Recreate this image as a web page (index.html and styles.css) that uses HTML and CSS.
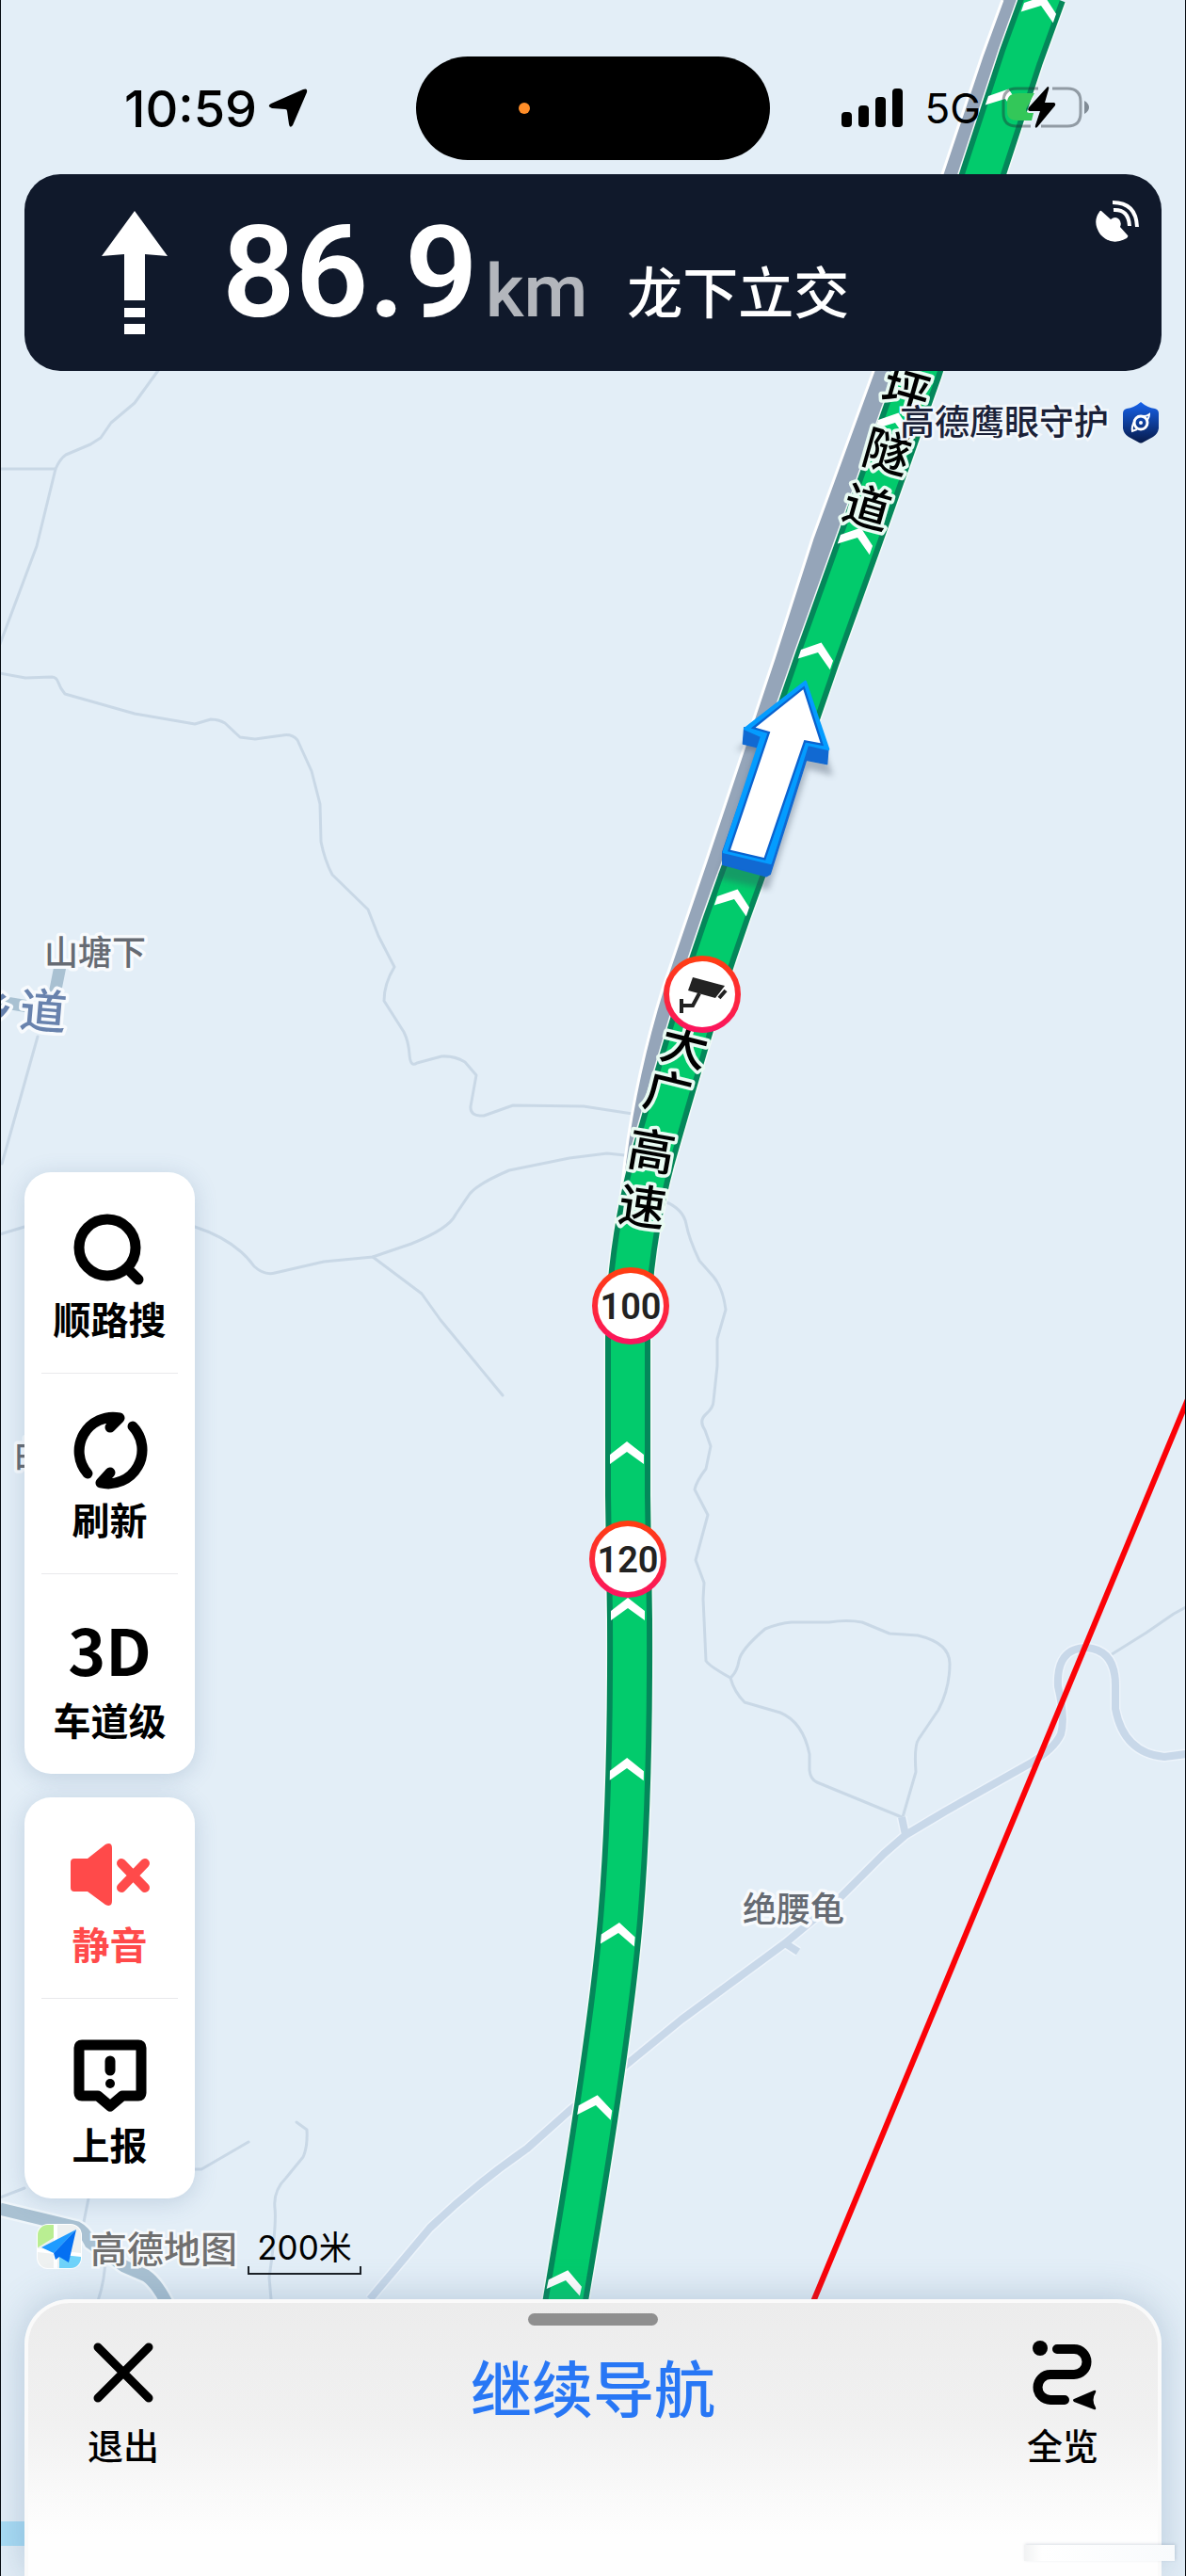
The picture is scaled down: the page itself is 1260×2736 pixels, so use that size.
FILE: index.html
```html
<!DOCTYPE html>
<html lang="zh-CN">
<head>
<meta charset="utf-8">
<meta name="viewport" content="width=device-width, initial-scale=1">
<title>高德地图 导航</title>
<link rel="stylesheet" href="styles.css">
</head>
<body>
<main class="screen">
  <svg class="map" viewBox="0 0 1260 2736" preserveAspectRatio="xMidYMin slice" role="img" aria-label="导航地图">
    <defs>
      <linearGradient id="ring" x1="0" y1="0" x2="0" y2="1">
        <stop offset="0" stop-color="#ff3d12"/><stop offset="1" stop-color="#fb155e"/>
      </linearGradient>
      <filter id="soft" x="-30%" y="-30%" width="160%" height="160%"><feGaussianBlur stdDeviation="10"/></filter>
      <path id="chevron" d="M-18 3L0-11 18 3V13L0 0-18 13Z"/>
    </defs>
    <rect class="water" x="0" y="2678" width="60" height="26"/>
    <g class="lane">
      <path d="M172 388L143 428 118 449 107 465 96 472 70 483Q64 487 59 498L39 580 0 684"/>
      <path d="M0 498H59"/>
      <path d="M0 715L27 720 55 719Q60 719 62 725T69 737L143 758 207 769 224 764Q232 764 239 768L255 783 271 785 300 781Q310 779 316 786L331 819 340 854 341 894Q345 914 353 929L391 966 402 994 419 1027Q408 1045 408 1063L429 1096Q434 1106 435 1120T443 1129L469 1122Q482 1121 494 1128L506 1142 500 1175Q499 1186 514 1185L545 1174 620 1175 672 1183"/>
      <path d="M664 1227L645 1225 605 1230 541 1243Q508 1257 499 1268L484 1290Q477 1305 437 1321L396 1335 344 1340 292 1352Q281 1355 270 1345 250 1317 207 1303H26L0 1311"/>
      <path d="M396 1335L448 1374 468 1402 534 1482"/>
      <path d="M40 1101L2 1236"/>
      <path d="M706 1276Q726 1284 729 1300T743 1339L758 1356Q768 1368 771 1391L762 1422V1451L758 1488Q758 1495 750 1502T749 1519L755 1536 750 1560Q740 1573 738 1582L752 1609 739 1657 748 1681 747 1698 750 1764Q754 1770 776 1782 780 1797 791 1808L829 1819Q853 1829 860 1863V1880Q861 1890 868 1893L958 1930"/>
      <path d="M776 1782Q783 1776 785 1764T813 1730Q828 1724 841 1723H881Q900 1720 916 1723L945 1735 975 1737Q1009 1745 1009 1767 1009 1793 997 1816L976 1847Q971 1854 973 1882L959 1930"/>
      <path d="M1178 1759L1218 1734 1247 1714 1260 1707"/>
      <path d="M207 2304H214L264 2275M0 2334L26 2324M315 2254L326 2262Q327 2280 322 2291L304 2313Q290 2327 292 2345T286 2419L288 2442M95 2330L89 2360M112 2396Q112 2420 104 2444"/>
    </g>
    <path class="street-edge" d="M393 2442L457 2366Q505 2320 560 2282L607 2240 669 2190 724 2145 834 2064 894 2014 939 1969 962 1949 1004 1924 1096 1872Q1120 1857 1127 1842 1132 1825 1124 1791 1122 1750 1155 1750 1185 1753 1185 1790V1815Q1194 1862 1237 1866L1260 1863M958 1930L962 1949M834 2064L848 2073"/>
    <path class="street" d="M393 2442L457 2366Q505 2320 560 2282L607 2240 669 2190 724 2145 834 2064 894 2014 939 1969 962 1949 1004 1924 1096 1872Q1120 1857 1127 1842 1132 1825 1124 1791 1122 1750 1155 1750 1185 1753 1185 1790V1815Q1194 1862 1237 1866L1260 1863M958 1930L962 1949M834 2064L848 2073"/>
    <path class="river-edge" d="M0 2346L82 2366Q90 2370 96 2382L132 2407 155 2417Q168 2426 180 2452"/>
    <path class="river" d="M0 2346L82 2366Q90 2370 96 2382L132 2407 155 2417Q168 2426 180 2452M64 1026L58 1056M0 1064L30 1069"/>
    <path class="ray" d="M1262 1486L863 2447"/>

    <path class="carriageway" d="M1065 0L1043 60 1001 185 928 394 863 572 822 700 750 915 704 1050 676 1155 664 1232 654 1314 643 1430 667 1430 700 1210 758 1010 868 700 1107 0Z"/>
    <path class="shoulder" d="M1065 0L1043 60 1001 185 928 394 863 572 822 700 750 915 704 1050Q676 1140 664 1232L643 1410"/>
    <g class="route">
      <path class="route-halo" d="M1109-6L1085 60 1044 185 977 394 914 572 868 700 790 925Q757 1014 733 1095T693 1232Q667 1330 667 1424V1588L669 1720Q670 1920 658 2050T600 2448"/>
      <path class="route-border" d="M1109-6L1085 60 1044 185 977 394 914 572 868 700 790 925Q757 1014 733 1095T693 1232Q667 1330 667 1424V1588L669 1720Q670 1920 658 2050T600 2448"/>
      <path class="route-fill" d="M1109-6L1085 60 1044 185 977 394 914 572 868 700 790 925Q757 1014 733 1095T693 1232Q667 1330 667 1424V1588L669 1720Q670 1920 658 2050T600 2448"/>
    </g>
    <g fill="#fff">
      <use href="#chevron" transform="translate(1106 6) rotate(19)"/>
      <use href="#chevron" transform="translate(1068 105) rotate(19)"/>
      <use href="#chevron" transform="translate(951 449) rotate(19)"/>
      <use href="#chevron" transform="translate(911 571) rotate(19)"/>
      <use href="#chevron" transform="translate(869 693) rotate(19)"/>
      <use href="#chevron" transform="translate(780 955) rotate(19)"/>
      <use href="#chevron" transform="translate(666 1542)"/>
      <use href="#chevron" transform="translate(667 1708)"/>
      <use href="#chevron" transform="translate(666 1878) rotate(1)"/>
      <use href="#chevron" transform="translate(657 2053) rotate(5)"/>
      <use href="#chevron" transform="translate(633 2236) rotate(9)"/>
      <use href="#chevron" transform="translate(601 2422) rotate(12)"/>
    </g>

    <g class="road-name">
      <text transform="translate(962 417) rotate(16)" y="17">坪</text>
      <text transform="translate(942 481) rotate(16)" y="17">隧</text>
      <text transform="translate(921 540) rotate(16)" y="17">道</text>
      <text transform="translate(727 1112) rotate(14)" y="17">大</text>
      <text transform="translate(709 1162) rotate(14)" y="17">广</text>
      <text transform="translate(692 1224) rotate(10)" y="17">高</text>
      <text transform="translate(682 1283) rotate(8)" y="17">速</text>
    </g>
    <g class="place">
      <text x="101" y="1025">山塘下</text>
      <text x="843" y="2041">绝腰龟</text>
      <text x="33" y="1558">曲</text>
    </g>
    <g class="village-road">
      <text transform="translate(-10 1072) rotate(5)" y="17">乡</text>
      <text transform="translate(46 1075) rotate(5)" y="17">道</text>
    </g>

    <g transform="translate(746 1056)">
      <circle r="38" fill="#fff" stroke="url(#ring)" stroke-width="6"/>
      <path d="M-10-18L24-9 14 4-15-4Z" fill="#222"/>
      <path d="M-3-1L-10 12H-22M-22 5V20M25-4L18 4" fill="none" stroke="#222" stroke-width="4"/>
    </g>
    <g class="limit" transform="translate(670 1387)"><circle r="38"/><text y="14">100</text></g>
    <g class="limit" transform="translate(667 1656)"><circle r="38"/><text y="14">120</text></g>

    <g transform="translate(700 700) scale(.3333)">
      <path d="M470 120L555 372 475 350 350 735 190 700 310 290 245 290Z" fill="#39465a" opacity=".35" filter="url(#soft)"/>
      <path d="M272 218L268 270 318 282 203 615V655L342 693 355 685 470 322 536 335 540 285Z" fill="#1169d2" stroke="#1169d2" stroke-width="4" stroke-linejoin="round"/>
      <path d="M467 72L540 287 474 272 356 650 207 615 328 246 274 222Z" fill="#049cff" stroke="#049cff" stroke-width="8" stroke-linejoin="round"/>
      <path d="M460 97L515 268 463 258 335 633 228 608 355 232 308 218Z" fill="#fff" stroke="#0b63cf" stroke-width="14" paint-order="stroke"/>
    </g>
  </svg>

  <div class="hud">
    <header class="status">
      <div class="status-time">
        <time>10:59</time>
        <svg width="42" height="42" viewBox="0 0 42 42" aria-label="定位"><path d="M37 1Q42-1 41 4L26 39Q23 43 22 38L20 24Q20 22 18 22L4 21Q-2 19 3 16Z"/></svg>
      </div>
      <div class="island"><i></i></div>
      <div class="status-net">
        <svg width="66" height="42" viewBox="0 0 66 42" aria-label="信号"><rect y="25" width="11" height="16" rx="4"/><rect x="18" y="18" width="11" height="23" rx="4"/><rect x="36" y="9" width="11" height="32" rx="4"/><rect x="54" width="11" height="41" rx="4"/></svg>
        <span>5G</span>
        <svg width="94" height="46" viewBox="0 0 94 46" aria-label="充电中">
          <path d="M39 2H16Q2 2 2 16V28Q2 42 16 42H31M54 2H70Q84 2 84 16V28Q84 42 70 42H42" fill="none" stroke="#1e2833" stroke-opacity=".42" stroke-width="3"/>
          <path d="M88 15Q93 18 93 22T88 29Z" fill="#1e2833" fill-opacity=".5"/>
          <path d="M35 7H18Q6 7 6 17V27Q6 36 18 36H32L34 28H29Q24 26 27 22Z" fill="#33c759"/>
          <path d="M49 0Q51 0 50 3L46 17H56Q58 18 57 20L38 43Q35 45 36 41L41 26H30Q27 25 29 22Z"/>
        </svg>
      </div>
    </header>

    <section class="banner" aria-label="下一步">
      <svg class="turn" width="70" height="132" viewBox="0 0 70 132" fill="#fff" aria-label="直行"><path d="M35 0L70 48Q58 47 46 46V95H24V46Q12 47 0 48ZM24 103H46V113H24ZM24 120H46V131H24Z"/></svg>
      <p class="distance"><strong>86.9</strong><span>km</span></p>
      <h1>龙下立交</h1>
      <svg class="gps" width="46" height="46" viewBox="0 0 46 46" aria-label="卫星信号"><path d="M6 11L16 20Q21 16 25 20 28 24 26 28L34 37Q35 38 33 40 17 49 5 36-4 23 4 12Q5 10 6 11Z" fill="#fff"/><path d="M19 10Q35 9 36 27M18 2Q43 2 44 28" fill="none" stroke="#fff" stroke-width="4"/></svg>
    </section>

    <p class="guard">高德鹰眼守护
      <svg width="38" height="44" viewBox="0 0 38 44"><defs><linearGradient id="shield" x1="0" y1="0" x2="0" y2="1"><stop offset="0" stop-color="#1763ec"/><stop offset="1" stop-color="#071a4a"/></linearGradient></defs><path d="M19 0Q26 6 34 7 38 8 38 12V28Q37 34 32 37L21 43Q19 44 17 43L6 37Q1 34 0 28V12Q0 8 4 7 12 6 19 0Z" fill="url(#shield)"/><circle cx="19" cy="22" r="7" fill="none" stroke="#fff" stroke-width="3"/><circle cx="19" cy="22" r="2" fill="#fff"/><path d="M12 21Q9 26 10 31L15 29M22 15Q25 15 28 13 28 16 26 19" fill="none" stroke="#fff" stroke-width="2"/></svg>
    </p>

    <nav class="tools" aria-label="导航工具">
      <div class="card">
        <button type="button">
          <svg width="84" height="84" viewBox="0 0 84 84" fill="none" stroke="#000" stroke-width="11" stroke-linecap="round"><circle cx="39" cy="40" r="30"/><path d="M61 63L72 74"/></svg>
          <span>顺路搜</span>
        </button>
        <button type="button">
          <svg width="84" height="84" viewBox="0 0 84 84" fill="none" stroke="#000" stroke-width="11" stroke-linecap="round" stroke-linejoin="round"><path d="M18 67A36 36 0 0 1 52 8L42 18M66 17A36 36 0 0 1 32 77L42 66"/></svg>
          <span>刷新</span>
        </button>
        <button type="button"><b>3D</b><span>车道级</span></button>
      </div>
      <div class="card">
        <button type="button" class="muted">
          <svg width="86" height="84" viewBox="0 0 86 84" fill="#ff4a4a"><path d="M5 25H19L38 10Q45 7 45 14V70Q45 77 38 74L19 60H5Q1 60 1 56V29Q1 25 5 25Z"/><path d="M55 30L80 56M80 30L55 56" stroke="#ff4a4a" stroke-width="10" stroke-linecap="round"/></svg>
          <span>静音</span>
        </button>
        <button type="button">
          <svg width="84" height="84" viewBox="0 0 84 84"><path d="M12 10H72Q75 10 75 13V61Q75 64 72 64H55L42 75 29 64H12Q9 64 9 61V13Q9 10 12 10Z" fill="none" stroke="#000" stroke-width="11" stroke-linejoin="round"/><path d="M42 27V37" stroke="#000" stroke-width="11" stroke-linecap="round"/><circle cx="42" cy="51" r="5"/></svg>
          <span>上报</span>
        </button>
      </div>
    </nav>

    <div class="credit">
      <svg width="48" height="48" viewBox="0 0 48 48"><defs><clipPath id="tile"><rect x="1" y="1" width="46" height="46" rx="11"/></clipPath></defs><rect width="48" height="48" rx="12" fill="#fff"/><g clip-path="url(#tile)"><rect width="48" height="48" fill="#eef1f1"/><path d="M0 0H19V14L0 26Z" fill="#b9ee92"/><path d="M24 48V34L48 33V48Z" fill="#6fd3fa"/><path d="M20 0V48M0 28L48 33" stroke="#fff" stroke-width="4"/></g><path d="M42 6L5 25 18 31Z" fill="#1f9bff"/><path d="M42 6L18 31 20 38 24 35 34 41Z" fill="#0470f2"/></svg>
      <strong>高德地图</strong>
      <span class="scale">200米</span>
    </div>

    <footer class="sheet">
      <i class="grip"></i>
      <button type="button" class="side-action">
        <svg width="74" height="76" viewBox="0 0 74 76" fill="none" stroke="#000" stroke-width="9" stroke-linecap="round"><path d="M10 9L64 63M64 9L10 63"/></svg>
        <span>退出</span>
      </button>
      <button type="button" class="resume">继续导航</button>
      <button type="button" class="side-action">
        <svg width="74" height="76" viewBox="0 0 74 76"><circle cx="13" cy="10" r="8"/><path d="M31 11H49A13 13 0 0 1 49 38H24A13 13 0 0 0 24 65H39" fill="none" stroke="#000" stroke-width="10" stroke-linecap="round"/><path d="M49 64L70 55Q73 54 72 57 67 65 72 73 73 76 70 75L49 67Q47 65 49 64Z"/></svg>
        <span>全览</span>
      </button>
      <i class="tab-strip"></i>
    </footer>
  </div>
</main>
</body>
</html>
```

FILE: styles.css
```css
* { box-sizing: border-box; }

body {
  margin: 0;
  background: #e3eef7;
  color: #000;
  font-family: Inter, "Noto Sans CJK SC", sans-serif;
}

p, h1 { margin: 0; }

button {
  padding: 0;
  border: 0;
  background: none;
  color: inherit;
  font: inherit;
  cursor: pointer;
}

svg { flex: none; }

.screen {
  position: relative;
  min-height: 100vh;
  overflow: hidden;
  border: solid #050a10;
  border-width: 0 1px;
}

/* Map canvas behind the interface */
.map {
  position: absolute;
  inset: 0;
  width: 100%;
  height: 100%;
}

.map text { font-family: "Noto Sans CJK SC", sans-serif; text-anchor: middle; paint-order: stroke; stroke-linejoin: round; }
.water { fill: #a9dcf5; }
.lane { fill: none; stroke: #c9d8e6; stroke-width: 3; stroke-linecap: round; stroke-linejoin: round; }
.street-edge { fill: none; stroke: #edf4fb; stroke-width: 11; }
.street { fill: none; stroke: #c8d8e9; stroke-width: 8; stroke-linejoin: round; }
.river-edge { fill: none; stroke: #eef5fa; stroke-width: 18; }
.river { fill: none; stroke: #a9c1d2; stroke-width: 13; }
.ray { fill: none; stroke: #fb0207; stroke-width: 6; }
.carriageway { fill: #95a5b9; }
.shoulder { fill: none; stroke: #fff; stroke-width: 3; }
.route path { fill: none; }
.route-halo { stroke: #f3faf8; stroke-width: 51; }
.route-border { stroke: #04875a; stroke-width: 48; }
.route-fill { stroke: #02cb6c; stroke-width: 36; }
.road-name text { font-size: 50px; font-weight: 500; stroke: #e9fbf3; stroke-width: 7px; }
.place text { font-size: 36px; font-weight: 500; fill: #666b73; stroke: #f7fafd; stroke-width: 7px; }
.village-road text { font-size: 50px; font-weight: 500; fill: #6882ad; stroke: #f7fafd; stroke-width: 7px; }
.limit circle { fill: #fff; stroke: url(#ring); stroke-width: 6px; }
.limit text { font: 600 38px Roboto, sans-serif; fill: #222; }

/* Interface column */
.hud {
  position: relative;
  display: flex;
  flex-direction: column;
  min-height: 100vh;
  padding: 0 25px;
}

.status {
  display: grid;
  grid-template-columns: 1fr 376px 1fr;
  align-items: center;
  height: 185px;
  padding-top: 45px;
}

.status-time, .status-net { display: flex; align-items: center; }
.status-time { gap: 12px; padding-left: 106px; font-size: 54px; font-weight: 500; }
.status-net { justify-content: flex-end; gap: 22px; padding-right: 76px; font-size: 44px; }

.island {
  display: flex;
  align-items: center;
  height: 110px;
  padding-left: 109px;
  border-radius: 55px;
  background: #000;
}

.island i { width: 12px; height: 12px; border-radius: 50%; background: #ff8d28; }

.banner {
  display: flex;
  align-items: center;
  min-height: 209px;
  padding: 0 24px 0 82px;
  border-radius: 38px;
  background: #10192b;
  color: #fff;
}

.distance { display: flex; align-items: baseline; margin-left: 58px; font-family: Roboto, sans-serif; line-height: 1; }
.distance strong { font-size: 136px; font-weight: 600; }
.distance span { margin-left: 8px; color: #b3b6bc; font-size: 78px; font-weight: 500; }
.banner h1 { margin: 44px 0 0 42px; font-size: 59px; font-weight: 500; line-height: 60px; }
.gps { align-self: flex-start; margin: 28px 0 0 auto; }

.guard {
  display: flex;
  align-items: center;
  align-self: flex-end;
  gap: 15px;
  margin: 33px 3px 0 0;
  color: #1a2138;
  font-size: 37px;
  font-weight: 500;
  line-height: 44px;
  -webkit-text-stroke: 5px #f3f8fc;
  paint-order: stroke fill;
}

.tools {
  display: flex;
  flex-direction: column;
  gap: 25px;
  width: 181px;
  margin-top: auto;
}

.card {
  display: flex;
  flex-direction: column;
  border-radius: 28px;
  background: #fff;
  box-shadow: 0 4px 24px rgba(70, 105, 145, .22);
}

.card button {
  position: relative;
  display: flex;
  flex-direction: column;
  align-items: center;
  justify-content: center;
  height: 213px;
  padding-top: 14px;
  font-size: 40px;
  font-weight: 700;
  line-height: 60px;
}

.card button + button::before {
  content: "";
  position: absolute;
  inset: 0 18px auto;
  height: 1px;
  background: #e9e9ec;
}

.card svg { margin-bottom: 4px; }
.card b { height: 88px; font: 700 68px/80px "Noto Sans CJK SC", sans-serif; }
.card .muted { color: #ff4a4a; }

.credit {
  display: flex;
  align-items: center;
  height: 107px;
  padding: 0 0 6px 13px;
}

.credit strong {
  margin-left: 9px;
  color: #707070;
  font-size: 39px;
  font-weight: 500;
  -webkit-text-stroke: 5px #f7fafc;
  paint-order: stroke fill;
}

.scale {
  width: 121px;
  margin: 4px 0 0 11px;
  border: solid #1b1f24;
  border-width: 0 2px 2px;
  border-image: linear-gradient(transparent 84%, #1b1f24 84%) 2;
  font-size: 35px;
  font-weight: 400;
  line-height: 54px;
  text-align: center;
}

.sheet {
  position: relative;
  display: flex;
  align-items: flex-start;
  justify-content: space-between;
  min-height: 294px;
  padding: 38px 63px 0;
  border: 4px solid #fafafa;
  border-bottom: 0;
  border-radius: 48px 48px 0 0;
  background: linear-gradient(#ececec, #f1f1f1 45%, #fefefe 85%);
  box-shadow: 0 0 40px rgba(70, 105, 145, .3);
}

.grip {
  position: absolute;
  top: 11px;
  left: calc(50% - 69px);
  width: 138px;
  height: 13px;
  border-radius: 7px;
  background: #8f8f8f;
}

.tab-strip {
  position: absolute;
  right: -18px;
  bottom: 16px;
  width: 160px;
  height: 17px;
  background: linear-gradient(90deg, #f1f2f3, #fff 12%, #f8fafc);
  box-shadow: 1px -1px 3px rgba(70, 90, 120, .2);
}

.side-action { display: flex; flex-direction: column; align-items: center; gap: 12px; font-size: 38px; font-weight: 500; line-height: 52px; }
.resume { margin-top: 13px; color: #2877f5; font-size: 65px; font-weight: 500; line-height: 84px; }
```
